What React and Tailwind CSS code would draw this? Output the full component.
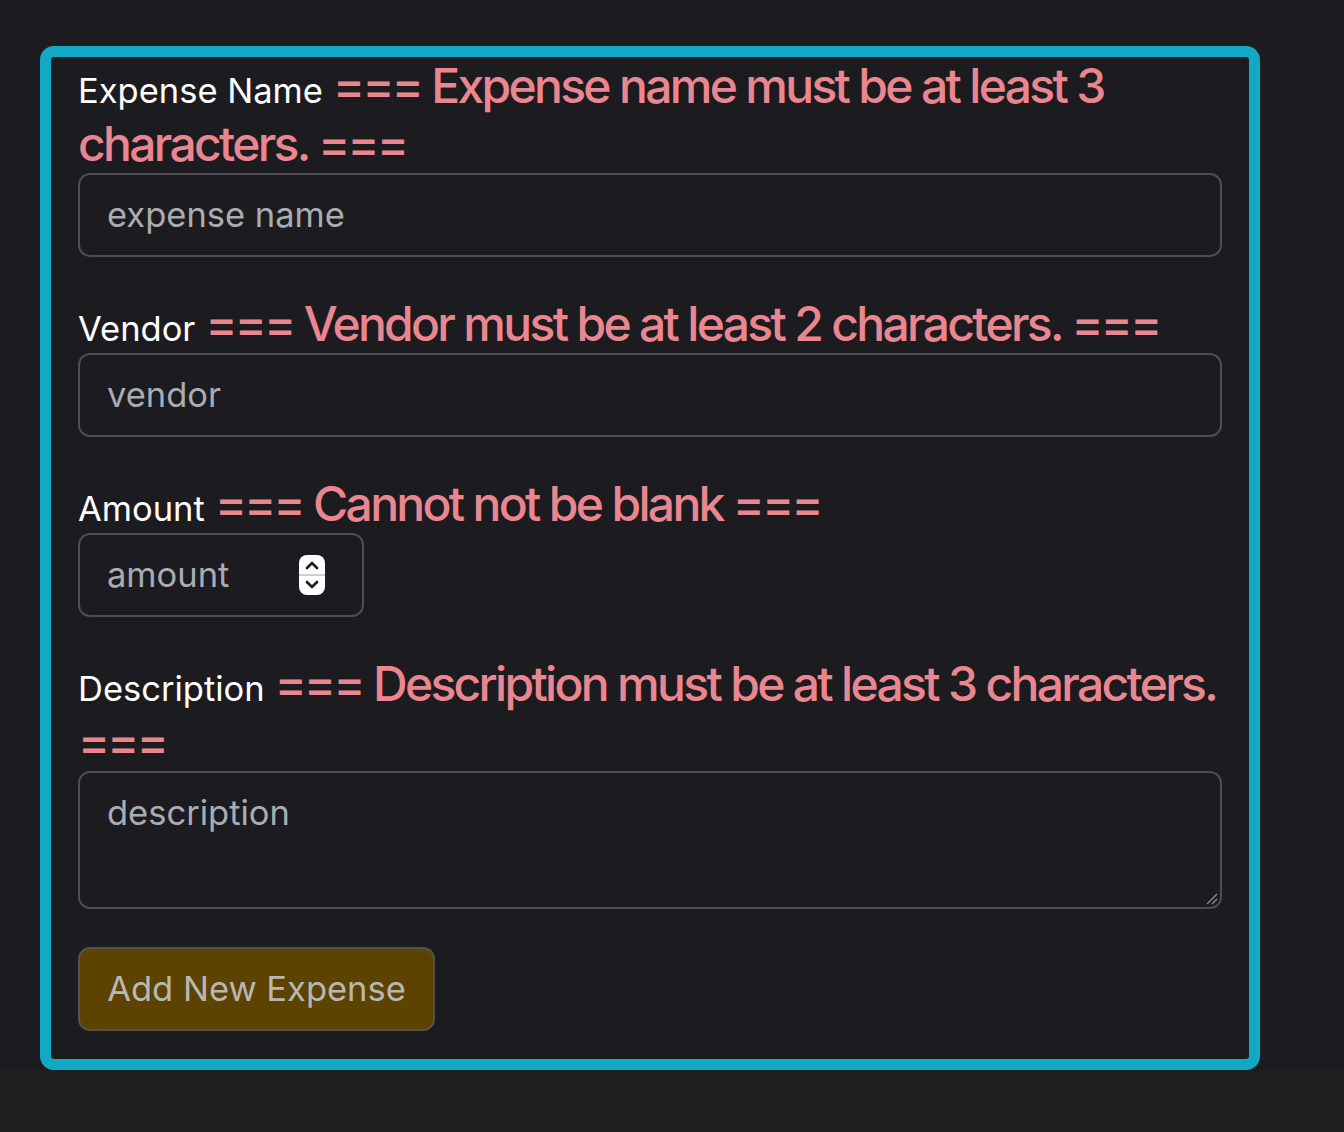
import React from "react";

const font = { fontFamily: "Inter, 'Noto Sans', 'Liberation Sans', sans-serif" };

function Label({ name, error, className = "" }) {
  return (
    <div className={"text-[48px] leading-[58px] font-medium text-[#ea868f] tracking-[-0.056em] " + className}>
      <span className="text-[34.5px] leading-none font-normal text-white tracking-normal">{name}</span>{" "}
      === {error} ===
    </div>
  );
}

function Spinner() {
  return (
    <div className="w-[26px] h-[40px] bg-white rounded-[8px] flex flex-col items-center justify-between py-[5px] relative">
      <svg width="16" height="10" viewBox="0 0 16 10" fill="none">
        <path d="M3 8 L8 3 L13 8" stroke="#1c1b20" strokeWidth="2.6" strokeLinecap="round" strokeLinejoin="round" />
      </svg>
      <div className="absolute left-0 right-0 top-[19px] h-[2px] bg-[#cfcfcf]" />
      <svg width="16" height="10" viewBox="0 0 16 10" fill="none">
        <path d="M3 2 L8 7 L13 2" stroke="#1c1b20" strokeWidth="2.6" strokeLinecap="round" strokeLinejoin="round" />
      </svg>
    </div>
  );
}

const field = "border-2 border-[#4d4d52] rounded-[12px] text-[34.5px] text-[#a9adb1]";

export default function App() {
  return (
    <div className="min-h-[1132px] bg-[#1e1e1e]" style={font}>
      <div className="h-[1069px] bg-[#1c1b20] pt-[46px] pl-[40px]">
        <div className="w-[1220px] border-[11px] border-[#11a9c6] rounded-[14px] px-[27px] pb-[28px]">
          <Label name="Expense Name" error="Expense name must be at least 3 characters." />
          <div className={"h-[84px] flex items-center px-[27px] " + field}>expense name</div>

          <Label className="mt-[38px]" name="Vendor" error="Vendor must be at least 2 characters." />
          <div className={"h-[84px] flex items-center px-[27px] " + field}>vendor</div>

          <Label className="mt-[38px]" name="Amount" error="Cannot not be blank" />
          <div className={"w-[286px] h-[84px] flex items-center justify-between pl-[27px] pr-[37px] " + field}>
            <span>amount</span>
            <Spinner />
          </div>

          <Label className="mt-[38px]" name="Description" error="Description must be at least 3 characters." />
          <div className={"h-[138px] px-[27px] pt-[16px] leading-[48px] relative " + field}>
            description
            <svg className="absolute right-[1px] bottom-[1px]" width="14" height="14" viewBox="0 0 14 14">
              <path d="M2 12 L12 2" stroke="#8a8a8a" strokeWidth="1.5" />
              <path d="M7 12 L12 7" stroke="#8a8a8a" strokeWidth="1.5" />
            </svg>
          </div>

          <div className="mt-[38px] w-[357px] h-[84px] bg-[#5c4300] border-2 border-[#55524d] rounded-[12px] flex items-center justify-center text-[34.5px] text-[#b9b7b3]">
            Add New Expense
          </div>
        </div>
      </div>
    </div>
  );
}
